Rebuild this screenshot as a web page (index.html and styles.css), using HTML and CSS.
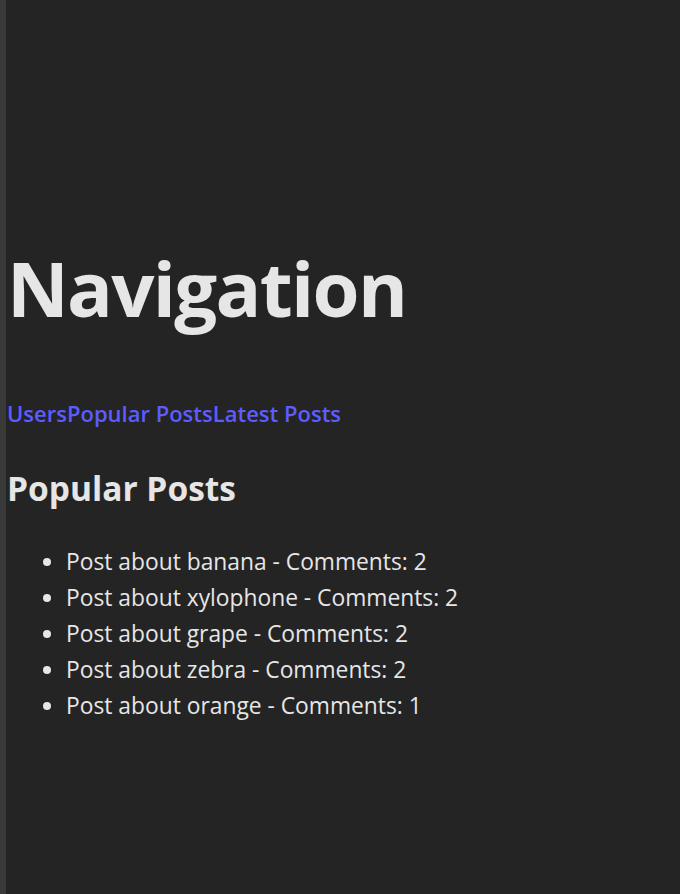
FILE: index.html
```html
<!DOCTYPE html>
<html>
<head>
<meta charset="utf-8">
<link rel="stylesheet" href="styles.css">
</head>
<body>
<div class="page">
  <h1 class="title">Navigation</h1>
  <nav class="nav">
    <a href="#" class="nav-link">Users</a><a href="#" class="nav-link">Popular Posts</a><a href="#" class="nav-link">Latest Posts</a>
  </nav>
  <h2 class="section-title">Popular Posts</h2>
  <ul class="post-list">
    <li>Post about banana - Comments: 2</li>
    <li>Post about xylophone - Comments: 2</li>
    <li>Post about grape - Comments: 2</li>
    <li>Post about zebra - Comments: 2</li>
    <li>Post about orange - Comments: 1</li>
  </ul>
</div>
</body>
</html>
```

FILE: styles.css
```css
html, body {
  margin: 0;
  height: 100%;
}
body {
  background: #242424;
  border-left: 6px solid #3a3a3a;
  box-sizing: border-box;
  color: #e6e6e6;
  font-family: "Open Sans", "Noto Sans", sans-serif;
}
.page {
  padding: 240px 0 0 1px;
}
.title {
  font-size: 76px;
  font-weight: 700;
  line-height: 96px;
  margin: 0 0 62px;
  letter-spacing: -1.7px;
}
.nav {
  font-size: 22px;
  font-weight: 600;
  line-height: 30px;
}
.nav-link {
  color: #5c5cff;
  text-decoration: none;
}
.section-title {
  font-size: 33.5px;
  font-weight: 700;
  line-height: 40px;
  margin: 40px 0 36px;
}
.post-list {
  margin: 0;
  padding-left: 59px;
  font-size: 22.8px;
  line-height: 36px;
}
```
